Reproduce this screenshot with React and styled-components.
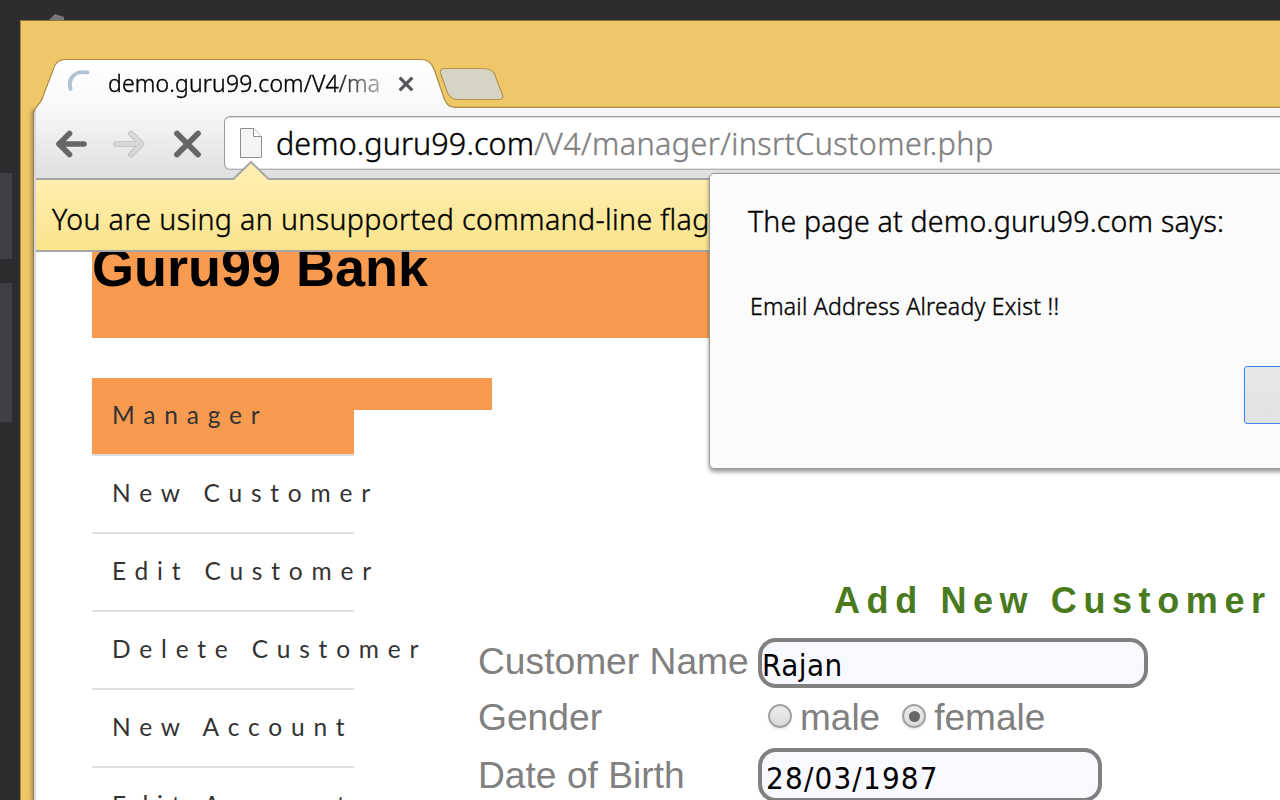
import React from "react";
import styled, { createGlobalStyle, css } from "styled-components";

const SEGOE = '"Noto Sans", "Open Sans", sans-serif';
const ARIAL = '"Liberation Sans", Arial, sans-serif';

const GlobalStyle = createGlobalStyle`
  * { box-sizing: border-box; }
  body { margin: 0; overflow: hidden; background: #2d2d2f; }
`;

const uiText = css`
  font-family: ${SEGOE};
  font-weight: 300;
  -webkit-text-stroke: 0.4px currentColor;
  white-space: nowrap;
`;

const Desktop = styled.div`
  position: relative;
  display: flex;
  width: 1280px;
  height: 800px;
  overflow: hidden;
  background: #2d2d2f;
  font-family: ${SEGOE};
  color: #000;
`;

const Strip = styled.div`
  display: flex;
  flex-direction: column;
  gap: 24px;
  width: 20px;
  padding-top: 173px;
  flex: none;
`;

const StripTile = styled.div`
  width: 12px;
  height: ${(p) => p.$height}px;
  background: #3f4046;
`;

const Notch = styled.svg`
  position: absolute;
  left: 47px;
  top: 13px;
`;

const Window = styled.div`
  position: relative;
  display: flex;
  flex-direction: column;
  flex: 1;
  min-width: 0;
  margin-top: 20px;
  padding-left: 14px;
  border-top: 1px solid #8a7440;
  border-left: 1px solid #a98b48;
  background: #efc768;
`;

const TabStrip = styled.div`
  position: relative;
  height: 87px;
  flex: none;
  padding-top: 38px;
`;

const TabArt = styled.svg`
  position: absolute;
  left: -1px;
  top: 36px;
  overflow: visible;
`;

const TabContent = styled.div`
  position: relative;
  display: flex;
  align-items: center;
  height: 48px;
  padding-left: 31px;
`;

const TabTitle = styled.span`
  ${uiText}
  width: 273px;
  margin-left: 16px;
  overflow: hidden;
  font-size: 23px;
  line-height: 34px;
  letter-spacing: 0.16px;
  mask-image: linear-gradient(to right, #000 225px, rgba(0, 0, 0, 0.3) 273px);
`;

const TabClose = styled.svg`
  margin: 2px 0 0 16px;
`;

const Body = styled.div`
  display: flex;
  flex-direction: column;
  flex: 1;
  min-height: 0;
  margin-left: -1px;
  border-left: 2px solid #dcd6d8;
  box-shadow: -1px 0 0 #958358, -2px 0 1px #b89b55, -4px 0 3px rgba(150, 120, 50, 0.4);
  border-top-left-radius: 6px;
  background: #fff;
`;

const Toolbar = styled.div`
  position: relative;
  display: flex;
  align-items: center;
  height: 72px;
  flex: none;
  padding-left: 17px;
  border-bottom: 2px solid #a6a6a8;
  border-top-left-radius: 5px;
  background: linear-gradient(#f8f8f8, #dfdfe0);
`;

const NavIcon = styled.svg`
  width: 36px;
  height: 32px;
  flex: none;
  margin: 1px 22px 0 0;
`;

const Omnibox = styled.div`
  display: flex;
  align-items: center;
  align-self: flex-start;
  flex: 1;
  height: 54px;
  margin: 8px -8px 0 -3px;
  padding-left: 14px;
  border: 1px solid #9c9c9e;
  border-bottom-color: #b0b0b0;
  border-radius: 6px;
  box-shadow: inset 0 1px 1px #ddd, inset 0 -1px 0 #e2e2e2;
  background: #fff;
`;

const Url = styled.span`
  ${uiText}
  margin: -1px 0 0 13px;
  font-size: 30.5px;
  line-height: 44px;
  letter-spacing: 0.1px;
`;

const UrlPath = styled.span`
  color: #808080;
  letter-spacing: 0.42px;
`;

const InfoBar = styled.div`
  ${uiText}
  position: relative;
  height: 72px;
  flex: none;
  padding: 17px 0 0 16px;
  border-bottom: 2px solid #a6a6a6;
  background: linear-gradient(#ffeeae, #f9e48c);
  font-size: 28.5px;
  line-height: 44px;
  letter-spacing: 0.39px;
`;

const InfoArrow = styled.svg`
  position: absolute;
  left: 196px;
  top: -20px;
`;

const Page = styled.div`
  flex: 1;
  min-height: 0;
  padding-left: 56px;
  overflow: hidden;
`;

const Banner = styled.h1`
  height: 86px;
  margin: 0 0 40px;
  background: #f89b50;
  font: bold 54px/30px ${ARIAL};
  overflow: hidden;
`;

const Columns = styled.div`
  display: flex;
`;

const Menu = styled.ul`
  width: 400px;
  flex: none;
  margin: 0 -13px 0 0;
  padding: 0;
  list-style: none;
  background: linear-gradient(#f89b50, #f89b50) 0 0 / 400px 32px no-repeat;
`;

const MenuItem = styled.li`
  width: 262px;
  height: 78px;
  padding-left: 20px;
  border-bottom: 2px solid #dfdfdf;
  font-family: Lato, sans-serif;
  font-size: 24.5px;
  line-height: 74px;
  white-space: nowrap;
  letter-spacing: 8.82px;
  color: #333;
  ${(p) => p.$active && css`background: #f89b50;`}
`;

const Form = styled.form`
  flex: 1;
  min-width: 0;
  padding-top: 201px;
  font-family: ${ARIAL};
  color: #808080;
`;

const FormTitle = styled.h2`
  margin: 0 0 15px 355px;
  font-size: 36px;
  line-height: 44px;
  letter-spacing: 6.6px;
  white-space: nowrap;
  color: #4a7a1e;
`;

const FormRow = styled.div`
  display: flex;
  align-items: center;
  height: ${(p) => p.$height}px;
`;

const Label = styled.label`
  width: 280px;
  flex: none;
  margin: ${(p) => p.$shift}px 0 0 -1px;
  font-size: 37.2px;
  line-height: 44px;
  white-space: nowrap;
`;

const Field = styled.div`
  width: ${(p) => p.$width}px;
  height: ${(p) => p.$height}px;
  padding-left: ${(p) => p.$pad}px;
  padding-top: 3px;
  border: 4px solid #808080;
  border-radius: 18px;
  background: #f8f8ff;
  font-family: "DejaVu Sans Condensed", "DejaVu Sans", sans-serif;
  font-stretch: condensed;
  font-size: 31px;
  line-height: ${(p) => p.$line}px;
  letter-spacing: ${(p) => p.$spacing}px;
  white-space: nowrap;
  color: #000;
`;

const Choice = styled.span`
  display: flex;
  align-items: center;
  gap: 8px;
  margin-left: ${(p) => p.$offset}px;
  font-size: 37px;
  line-height: 44px;
`;

const Radio = styled.span`
  display: flex;
  align-items: center;
  justify-content: center;
  width: 24px;
  height: 24px;
  margin-top: -4px;
  border: 2px solid #a3a3a3;
  border-radius: 50%;
  background: linear-gradient(#ececec, #dcdcdc);
  box-shadow: 0 2px 1px #eee;
`;

const Dot = styled.span`
  width: 11px;
  height: 11px;
  border-radius: 50%;
  background: #666;
`;

const Dialog = styled.div`
  position: absolute;
  left: 709px;
  top: 173px;
  display: flex;
  flex-direction: column;
  width: 720px;
  height: 296px;
  padding: 25px 39px 0 38px;
  border: 1px solid #999;
  border-radius: 5px;
  background: #fbfbfb;
  box-shadow: 0 3px 4px rgba(0, 0, 0, 0.4);
`;

const DialogTitle = styled.div`
  ${uiText}
  font-size: 28.5px;
  line-height: 44px;
  letter-spacing: 0.2px;
`;

const DialogText = styled.p`
  ${uiText}
  margin: 45px 0 42px 2px;
  font-size: 23px;
  line-height: 36px;
  letter-spacing: 0.25px;
`;

const DialogButton = styled.button`
  width: 150px;
  height: 58px;
  margin-left: 496px;
  border: 1px solid #4285f4;
  border-radius: 3px;
  background: linear-gradient(#e7e7e7, #e2e2e2);
`;

const menu = ["Manager", "New Customer", "Edit Customer", "Delete Customer", "New Account", "Edit Account"];

export default function App() {
  return (
    <Desktop>
      <GlobalStyle />
      <Strip>
        <StripTile $height={86} />
        <StripTile $height={139} />
      </Strip>
      <Notch width="20" height="8" viewBox="0 0 20 8">
        <path d="M1 8 L8 1 L17 4 V8 Z" fill="#77777b" />
      </Notch>
      <Window>
        <TabStrip>
          <TabArt width="480" height="51" viewBox="0 0 480 51">
            <defs>
              <linearGradient id="tabFill" x1="0" y1="0" x2="0" y2="1">
                <stop offset="0" stopColor="#fff" />
                <stop offset="1" stopColor="#f8f8f8" />
              </linearGradient>
            </defs>
            <path d="M419 50.5 H1260" stroke="#ad8e48" strokeWidth="1.6" />
            <path
              d="M0.5 53 C4 47 6 47 8 42 L19 13 Q22 2.5 31 2.5 H387 Q396 2.5 400 12 L410 41 Q413 50 419 50 V53 Z"
              fill="url(#tabFill)"
            />
            <path
              d="M0.5 53 C4 47 6 47 8 42 L19 13 Q22 2.5 31 2.5 H387 Q396 2.5 400 12 L410 41 Q413 50 419 50"
              fill="none"
              stroke="#a88b49"
              strokeWidth="1.2"
            />
            <path
              d="M411 11.5 H450 Q458 11.5 461 18 L468.5 38 Q470 42.5 465 42.5 H424 Q417 42.5 413.5 36 L406.5 16 Q405.5 11.5 411 11.5 Z"
              fill="#d8d4c4"
              stroke="#b5964e"
              strokeWidth="1.2"
            />
          </TabArt>
          <TabContent>
            <svg width="26" height="28" viewBox="0 0 26 28">
              <path d="M4.5 20 C1.5 9 9 1.5 21.5 3.5" fill="none" stroke="#b3c1d4" strokeWidth="3.8" strokeLinecap="round" />
            </svg>
            <TabTitle>demo.guru99.com/V4/ma</TabTitle>
            <TabClose width="18" height="18" viewBox="0 0 18 18">
              <path d="M2.7 2.7 L15.3 15.3 M15.3 2.7 L2.7 15.3" stroke="#55565a" strokeWidth="3.2" />
            </TabClose>
          </TabContent>
        </TabStrip>
        <Body>
          <Toolbar>
            <NavIcon viewBox="0 0 36 32">
              <path d="M31 16 H6 M16.5 5.500 L6 16 L16.5 26.500" fill="none" stroke="#666" strokeWidth="5.6" strokeLinecap="round" strokeLinejoin="round" />
            </NavIcon>
            <NavIcon viewBox="0 0 36 32">
              <path d="M5 16 H30.500 M20 5.500 L30.500 16 L20 26.500" fill="none" stroke="#bcbcbc" strokeWidth="5.6" strokeLinecap="round" strokeLinejoin="round" />
              <path d="M5 16 H30.500 M20 5.500 L30.500 16 L20 26.500" fill="none" stroke="#d8d8d8" strokeWidth="4.2" strokeLinecap="round" strokeLinejoin="round" />
            </NavIcon>
            <NavIcon viewBox="0 0 36 32">
              <path d="M8 5.5 L29 26.5 M29 5.5 L8 26.5" stroke="#666" strokeWidth="5.8" strokeLinecap="round" />
            </NavIcon>
            <Omnibox>
              <svg width="24" height="32" viewBox="0 0 24 32">
                <path d="M1.5 1.5 H15 L22.5 9.5 V30.5 H1.5 Z" fill="#f4f4f5" stroke="#8e8e90" />
                <path d="M14.5 1.5 V9.5 H22.5" fill="#fff" stroke="#8e8e90" />
              </svg>
              <Url>
                demo.guru99.com
                <UrlPath>/V4/manager/insrtCustomer.php</UrlPath>
              </Url>
            </Omnibox>
          </Toolbar>
          <InfoBar>
            <InfoArrow width="38" height="20" viewBox="0 0 38 20">
              <path d="M0 20 L19 2 L38 20 Z" fill="#ffeeae" />
              <path d="M0 19 H1.5 L19 2 L36.5 19 H38" fill="none" stroke="#a6a6a8" strokeWidth="2" />
            </InfoArrow>
            You are using an unsupported command-line flag
          </InfoBar>
          <Page>
            <Banner>Guru99 Bank</Banner>
            <Columns>
              <Menu>
                {menu.map((m, i) => (
                  <MenuItem key={m} $active={i === 0}>{m}</MenuItem>
                ))}
              </Menu>
              <Form>
                <FormTitle>Add New Customer</FormTitle>
                <FormRow $height={50}>
                  <Label $shift={-5}>Customer Name</Label>
                  <Field $width={390} $height={50} $pad={0} $line={40} $spacing={0.5}>Rajan</Field>
                </FormRow>
                <FormRow $height={60}>
                  <Label $shift={-2}>Gender</Label>
                  <Choice $offset={10}><Radio />male</Choice>
                  <Choice $offset={22}><Radio><Dot /></Radio>female</Choice>
                </FormRow>
                <FormRow $height={54}>
                  <Label $shift={-1}>Date of Birth</Label>
                  <Field $width={344} $height={54} $pad={4} $line={46} $spacing={1.2}>28/03/1987</Field>
                </FormRow>
              </Form>
            </Columns>
          </Page>
        </Body>
      </Window>
      <Dialog>
        <DialogTitle>The page at demo.guru99.com says:</DialogTitle>
        <DialogText>Email Address Already Exist !!</DialogText>
        <DialogButton aria-label="OK" />
      </Dialog>
    </Desktop>
  );
}
